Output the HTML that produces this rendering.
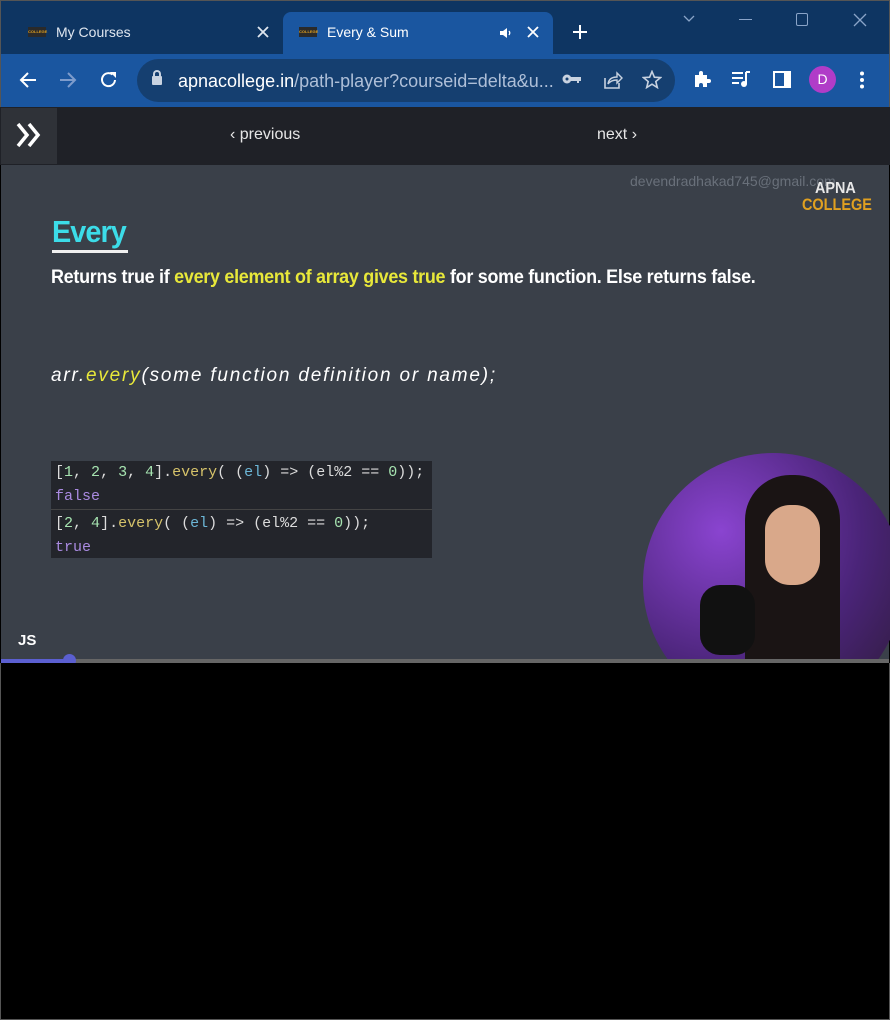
<!DOCTYPE html>
<html><head><meta charset="utf-8"><style>
*{margin:0;padding:0;box-sizing:border-box}
body{width:890px;height:1020px;background:#000;font-family:"Liberation Sans",sans-serif;position:relative;overflow:hidden}
.abs{position:absolute}
</style></head><body>
<!-- tab strip -->
<div class="abs" style="left:0;top:0;width:890px;height:54px;background:#0e3562;border:1px solid #555;border-bottom:none"></div>
<div class="abs" style="left:28px;top:27px;width:18px;height:10px;background:#2a2a2a;color:#e0a020;font-size:4px;font-weight:bold;line-height:10px;text-align:center">COLLEGE</div>
<div class="abs" style="left:56px;top:24px;color:#dfe6ef;font-size:14px">My Courses</div>
<svg class="abs" style="left:257px;top:26px" width="12" height="12"><path d="M1 1L11 11M11 1L1 11" stroke="#dfe6ef" stroke-width="1.8"/></svg>
<div class="abs" style="left:283px;top:12px;width:270px;height:44px;background:#1a56a0;border-radius:8px 8px 0 0"></div>
<div class="abs" style="left:299px;top:27px;width:18px;height:10px;background:#2a2a2a;color:#e0a020;font-size:4px;font-weight:bold;line-height:10px;text-align:center">COLLEGE</div>
<div class="abs" style="left:327px;top:24px;color:#fff;font-size:14px">Every &amp; Sum</div>
<svg class="abs" style="left:499px;top:27px" width="14" height="12"><path d="M1 4H4L8 1V11L4 8H1Z" fill="#fff"/><path d="M10 4Q11.5 6 10 8" stroke="#fff" fill="none" stroke-width="1.3"/></svg>
<svg class="abs" style="left:527px;top:26px" width="12" height="12"><path d="M1 1L11 11M11 1L1 11" stroke="#fff" stroke-width="1.8"/></svg>
<svg class="abs" style="left:572px;top:24px" width="16" height="16"><path d="M8 1V15M1 8H15" stroke="#fff" stroke-width="2"/></svg>
<svg class="abs" style="left:683px;top:15px" width="12" height="8"><path d="M1 1L6 6L11 1" stroke="#8aa4c8" fill="none" stroke-width="1.3"/></svg>
<div class="abs" style="left:739px;top:19px;width:13px;height:1px;background:#8aa4c8"></div>
<div class="abs" style="left:796px;top:13px;width:12px;height:13px;border:1px solid #8aa4c8;border-radius:2px"></div>
<svg class="abs" style="left:853px;top:13px" width="14" height="14"><path d="M1 1L13 13M13 1L1 13" stroke="#8aa4c8" stroke-width="1.3"/></svg>
<!-- toolbar -->
<div class="abs" style="left:0;top:54px;width:890px;height:53px;background:#1a56a0;border-left:1px solid #555;border-right:1px solid #555"></div>
<svg class="abs" style="left:19px;top:71px" width="18" height="18"><path d="M17 9H2M9 2L2 9L9 16" stroke="#fff" fill="none" stroke-width="2"/></svg>
<svg class="abs" style="left:59px;top:71px" width="18" height="18"><path d="M1 9H16M9 2L16 9L9 16" stroke="#7e9ccc" fill="none" stroke-width="2"/></svg>
<svg class="abs" style="left:99px;top:70px" width="20" height="20"><path d="M16 10A6.5 6.5 0 1 1 13.5 4.5" stroke="#fff" fill="none" stroke-width="2"/><path d="M11 2H17V8Z" fill="#fff"/></svg>
<div class="abs" style="left:137px;top:59px;width:538px;height:43px;background:#153f70;border-radius:22px"></div>
<div class="abs" style="left:152px;top:76px;width:10px;height:9px;background:#c8d2e0;border-radius:1px"></div>
<div class="abs" style="left:153px;top:70px;width:8px;height:8px;border:2px solid #c8d2e0;border-bottom:none;border-radius:4px 4px 0 0"></div>
<div class="abs" style="left:178px;top:71px;font-size:18px;color:#fff">apnacollege.in<span style="color:#aebfd8">/path-player?courseid=delta&amp;u...</span></div>
<svg class="abs" style="left:562px;top:73px" width="20" height="12"><circle cx="5" cy="6" r="4.5" fill="#c8d2e0"/><path d="M8 4H19V8H17V10H15V8H8Z" fill="#c8d2e0"/><circle cx="5" cy="6" r="1.5" fill="#153f70"/></svg>
<svg class="abs" style="left:603px;top:70px" width="20" height="19"><path d="M2 8V18H16V13" stroke="#c8d2e0" fill="none" stroke-width="1.6"/><path d="M5 14Q6 7 14 7V3L19 8L14 13V10Q8 10 5 14Z" stroke="#c8d2e0" fill="none" stroke-width="1.4"/></svg>
<svg class="abs" style="left:642px;top:70px" width="20" height="19"><path d="M10 1.5L12.4 7.2L18.5 7.6L13.8 11.5L15.3 17.5L10 14.2L4.7 17.5L6.2 11.5L1.5 7.6L7.6 7.2Z" stroke="#c8d2e0" fill="none" stroke-width="1.6"/></svg>
<svg class="abs" style="left:693px;top:70px" width="19" height="19"><path d="M2 5H6V3A2 2 0 0 1 10 3V5H14V9H16A2 2 0 0 1 16 13H14V17H10V15A2 2 0 0 0 6 15V17H2Z" fill="#fff"/></svg>
<svg class="abs" style="left:731px;top:71px" width="20" height="17"><path d="M1 2H12M1 7H12M1 12H8" stroke="#fff" stroke-width="2"/><path d="M15 1V13" stroke="#fff" stroke-width="2"/><circle cx="13" cy="13" r="3" fill="#fff"/><path d="M15 1H19" stroke="#fff" stroke-width="2"/></svg>
<div class="abs" style="left:773px;top:71px;width:18px;height:17px;border:2px solid #fff;border-right:7px solid #fff"></div>
<div class="abs" style="left:809px;top:66px;width:27px;height:27px;border-radius:50%;background:#b03cc8;color:#fff;font-size:14px;text-align:center;line-height:27px">D</div>
<svg class="abs" style="left:859px;top:71px" width="6" height="18"><circle cx="3" cy="2.5" r="2" fill="#fff"/><circle cx="3" cy="9" r="2" fill="#fff"/><circle cx="3" cy="15.5" r="2" fill="#fff"/></svg>
<!-- nav bar -->
<div class="abs" style="left:0;top:107px;width:890px;height:58px;background:#1f2127"></div>
<div class="abs" style="left:1px;top:108px;width:56px;height:56px;background:#2f3238"></div>
<svg class="abs" style="left:15px;top:122px" width="28" height="26"><path d="M3 2L12 13L3 24M14 2L23 13L14 24" stroke="#fff" fill="none" stroke-width="3.5"/></svg>
<div class="abs" style="left:230px;top:126px;color:#e6e6e6;font-size:16px">‹ previous</div>
<div class="abs" style="left:597px;top:126px;color:#e6e6e6;font-size:16px">next ›</div>
<!-- video -->
<div class="abs" style="left:1px;top:165px;width:888px;height:497px;background:#3a4049"></div>
<div class="abs" style="left:630px;top:173px;color:#69707a;font-size:14px">devendradhakad745@gmail.com</div>
<div class="abs" style="left:815px;top:180px;color:#e8e8e8;font-size:16px;font-weight:bold;transform:scaleX(.9);transform-origin:left">APNA</div>
<div class="abs" style="left:802px;top:195px;color:#e0a020;font-size:17px;font-weight:bold;transform:scaleX(.85);transform-origin:left">COLLEGE</div>
<div class="abs" style="left:52px;top:214px;color:#3cdce8;font-size:31px;font-weight:bold;letter-spacing:-1px;transform:scaleX(.93);transform-origin:left">Every</div>
<div class="abs" style="left:52px;top:250px;width:76px;height:3px;background:#f0f0f0"></div>
<div class="abs" style="left:51px;top:267px;color:#fff;font-size:19px;font-weight:bold;letter-spacing:-0.3px;transform:scaleX(.945);transform-origin:left;white-space:nowrap">Returns true if <span style="color:#e8e83a">every element of array gives true</span> for some function. Else returns false.</div>
<div class="abs" style="left:51px;top:365px;color:#fff;font-size:19px;font-style:italic;letter-spacing:1.8px;white-space:nowrap">arr.<span style="color:#e8e83a">every</span>(some function definition or name);</div>
<div class="abs" style="left:51px;top:461px;width:381px;height:97px;background:#23252b;font-family:'Liberation Mono',monospace;font-size:15px;color:#dcdcdc">
<div style="position:absolute;left:0;top:48px;width:381px;height:1px;background:#444"></div>
<div style="position:absolute;left:4px;top:3px">[<span style="color:#a6e3b0">1</span>, <span style="color:#a6e3b0">2</span>, <span style="color:#a6e3b0">3</span>, <span style="color:#a6e3b0">4</span>].<span style="color:#d6c36a">every</span>( (<span style="color:#6cb6d6">el</span>) =&gt; (el%2 == <span style="color:#a6e3b0">0</span>));</div>
<div style="position:absolute;left:4px;top:27px;color:#a98ae0">false</div>
<div style="position:absolute;left:4px;top:54px">[<span style="color:#a6e3b0">2</span>, <span style="color:#a6e3b0">4</span>].<span style="color:#d6c36a">every</span>( (<span style="color:#6cb6d6">el</span>) =&gt; (el%2 == <span style="color:#a6e3b0">0</span>));</div>
<div style="position:absolute;left:4px;top:78px;color:#a98ae0">true</div>
</div>
<div class="abs" style="left:643px;top:453px;width:260px;height:260px;border-radius:50%;background:radial-gradient(circle at 30% 30%,#8a44d0,#4a2478 55%,#2a1a30);clip-path:inset(0 13px 50px 0)"></div>
<div class="abs" style="left:745px;top:475px;width:95px;height:187px;background:#1a1414;border-radius:45px 45px 0 0"></div>
<div class="abs" style="left:765px;top:505px;width:55px;height:80px;background:#d9a88a;border-radius:25px"></div>
<div class="abs" style="left:700px;top:585px;width:55px;height:70px;background:#111;border-radius:20px"></div>
<div class="abs" style="left:18px;top:632px;color:#fff;font-size:15px;font-weight:bold">JS</div>
<div class="abs" style="left:1px;top:659px;width:888px;height:4px;background:#666"></div>
<div class="abs" style="left:1px;top:659px;width:69px;height:4px;background:#5b5fd0"></div>
<div class="abs" style="left:63px;top:654px;width:13px;height:13px;border-radius:50%;background:#5b5fd0"></div>
<div class="abs" style="left:0;top:663px;width:890px;height:357px;border:1px solid #555;border-top:none;background:#000"></div>
</body></html>
